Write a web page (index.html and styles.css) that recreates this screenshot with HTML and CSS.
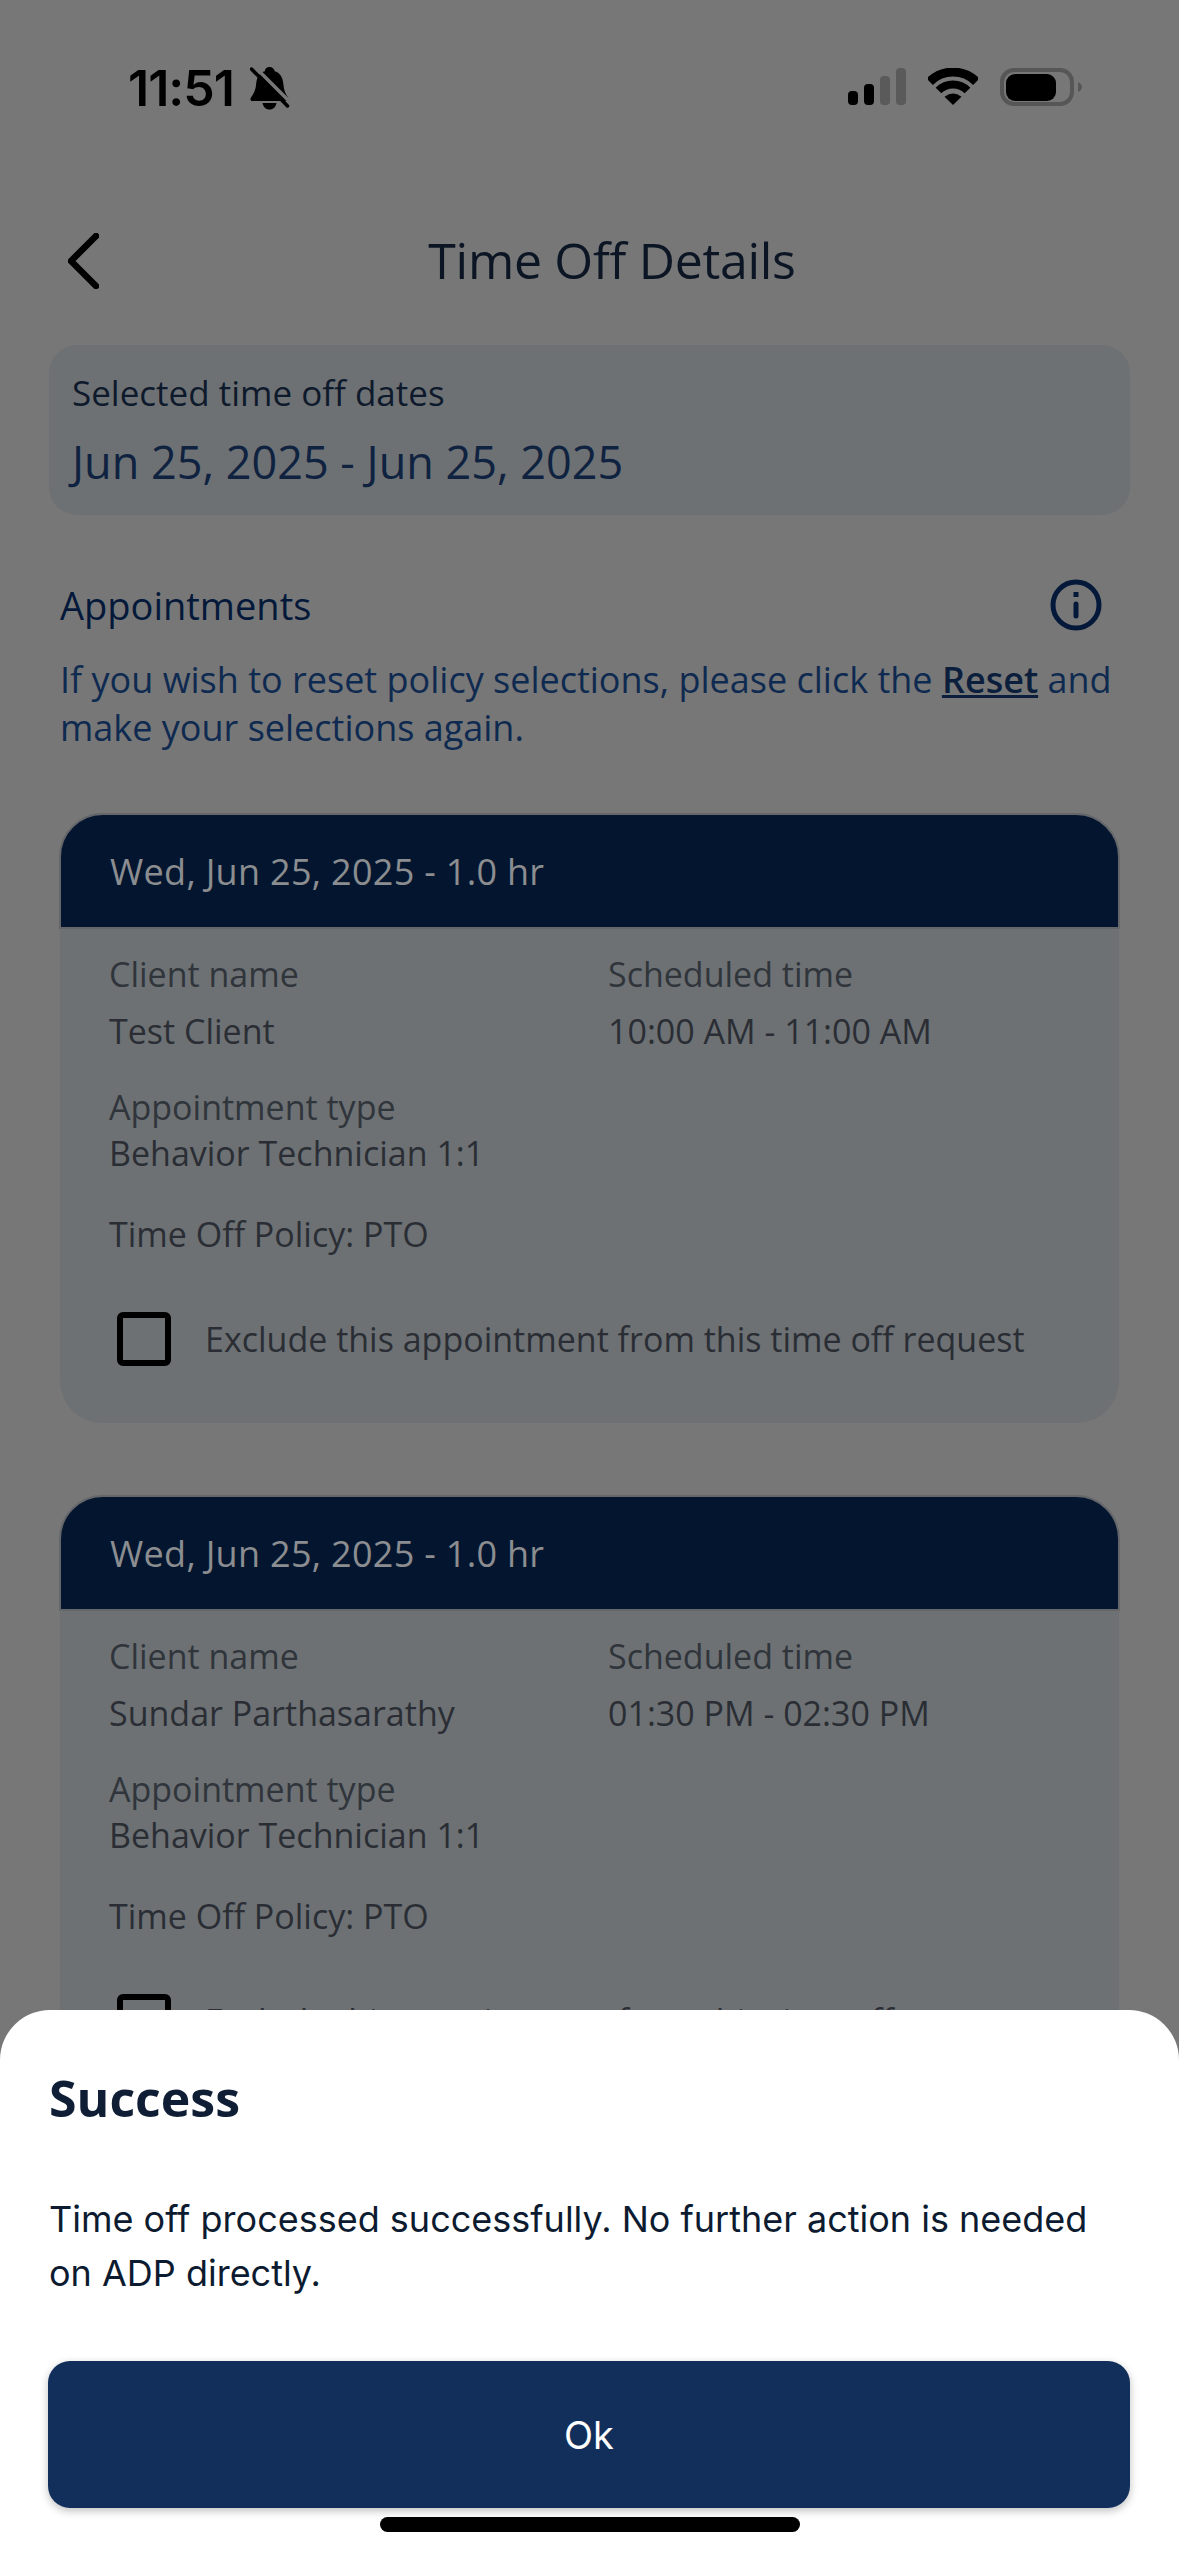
FILE: index.html
```html
<!DOCTYPE html>
<html lang="en">
<head>
<meta charset="utf-8">
<title>Time Off Details</title>
<link rel="stylesheet" href="styles.css">
</head>
<body>
<div class="screen">
  <header class="status">
    <div class="status-left">
      <span class="time">11:51</span>
      <svg class="bell" viewBox="0 0 40 43" width="40" height="43">
        <path d="M19.5 0c3 0 4.6 1.7 5.2 4.2C31 6 33 11.500 33.500 18c.4 5.500 2 9 4.500 12.500 1.300 1.900.5 3.500-1.800 3.500H2.800C.5 34-.3 32.400 1 30.500 3.500 27 5.500 23.500 6 18c.5-6.500 2.500-12 8.800-13.800C15 1.700 16.500 0 19.500 0z"/>
        <path d="M12.500 36h14c-.5 3.800-3.300 6.500-7 6.500s-6.500-2.700-7-6.500z"/>
        <path class="bell-gap" d="M4 -1L42 37"/>
        <path class="bell-slash" d="M1.500 2L37.500 39"/>
      </svg>
    </div>
    <div class="status-right">
      <svg class="signal" viewBox="0 0 58 37" width="58" height="37">
        <rect x="0" y="23" width="10" height="14" rx="4"/>
        <rect x="16" y="16" width="10" height="21" rx="4"/>
        <rect class="dim" x="32" y="8" width="10" height="29" rx="4"/>
        <rect class="dim" x="48" y="0" width="10" height="37" rx="4"/>
      </svg>
      <svg class="wifi" viewBox="0 0 50 37" width="50" height="37">
        <path class="arc-a" d="M1.700 13.700A33 33 0 0 1 48.300 13.700"/>
        <path class="arc-b" d="M10.500 22.500A20.500 20.500 0 0 1 39.500 22.500"/>
        <path d="M25 37L16.500 28.800Q25 22 33.500 28.800Z"/>
      </svg>
      <svg class="battery" viewBox="0 0 82 38" width="82" height="38">
        <rect class="shell" x="2" y="2" width="70" height="34" rx="12"/>
        <rect x="6" y="6" width="50" height="27" rx="9"/>
        <path class="cap" d="M78 14c2.500 1 4 2.700 4 5s-1.500 4-4 5z"/>
      </svg>
    </div>
  </header>

  <nav class="nav">
    <svg class="back" viewBox="0 0 31 56" width="31" height="56">
      <path d="M28 3L3 28L28 53"/>
    </svg>
    <h1 class="nav-title">Time Off Details</h1>
  </nav>

  <section class="dates">
    <div class="dates-label">Selected time off dates</div>
    <div class="dates-value">Jun 25, 2025 - Jun 25, 2025</div>
  </section>

  <section class="intro">
    <div class="intro-head">
      <h2 class="intro-title">Appointments</h2>
      <svg class="info" viewBox="0 0 52 52" width="52" height="52">
        <circle cx="26" cy="26" r="23"/>
        <path d="M26 25V37"/>
        <rect x="23.500" y="13" width="5" height="5"/>
      </svg>
    </div>
    <p class="intro-text">If you wish to reset policy selections, please click the <a class="reset">Reset</a> and make your selections again.</p>
  </section>

  <article class="card">
    <div class="card-head">Wed, Jun 25, 2025 - 1.0 hr</div>
    <div class="card-body">
      <div class="pair-row">
        <div class="pair">
          <div class="label">Client name</div>
          <div class="value">Test Client</div>
        </div>
        <div class="pair">
          <div class="label">Scheduled time</div>
          <div class="value">10:00 AM - 11:00 AM</div>
        </div>
      </div>
      <div class="label type-label">Appointment type</div>
      <div class="value type-value">Behavior Technician 1:1</div>
      <div class="value policy">Time Off Policy: PTO</div>
      <div class="exclude">
        <span class="checkbox"></span>
        <span class="exclude-text">Exclude this appointment from this time off request</span>
      </div>
    </div>
  </article>

  <article class="card">
    <div class="card-head">Wed, Jun 25, 2025 - 1.0 hr</div>
    <div class="card-body">
      <div class="pair-row">
        <div class="pair">
          <div class="label">Client name</div>
          <div class="value">Sundar Parthasarathy</div>
        </div>
        <div class="pair">
          <div class="label">Scheduled time</div>
          <div class="value">01:30 PM - 02:30 PM</div>
        </div>
      </div>
      <div class="label type-label">Appointment type</div>
      <div class="value type-value">Behavior Technician 1:1</div>
      <div class="value policy">Time Off Policy: PTO</div>
      <div class="exclude">
        <span class="checkbox"></span>
        <span class="exclude-text">Exclude this appointment from this time off request</span>
      </div>
    </div>
  </article>

  <aside class="sheet">
    <h3 class="sheet-title">Success</h3>
    <p class="sheet-text">Time off processed successfully. No further action is needed on ADP directly.</p>
    <button class="sheet-btn">Ok</button>
  </aside>
  <div class="home-bar"></div>
</div>
</body>
</html>
```

FILE: styles.css
```css
* { box-sizing: border-box; }
html, body { margin: 0; padding: 0; }
body { background: #777777; font-family: "Open Sans", "Liberation Sans", sans-serif; }
.screen { position: relative; width: 1179px; height: 2556px; overflow: hidden; background: #777777; }

.status { height: 172px; display: flex; justify-content: space-between; padding: 67px 97px 0 128px; }
.status-left { display: flex; align-items: flex-start; gap: 16px; }
.time { font-family: Inter, "Liberation Sans", sans-serif; font-weight: 600; font-size: 50px; line-height: 42px; letter-spacing: -1px; color: #000; }
.bell { display: block; }
.bell path { fill: #000; }
.bell .bell-gap { fill: none; stroke: #777777; stroke-width: 3.500; }
.bell .bell-slash { fill: none; stroke: #000; stroke-width: 3.500; stroke-linecap: round; }
.status-right { display: flex; align-items: flex-start; padding-top: 1px; gap: 22px; }
.signal rect { fill: #000; }
.signal .dim { fill: #5a5a5a; }
.wifi { fill: #000; }
.wifi path { fill: #000; }
.wifi .arc-a { fill: none; stroke: #000; stroke-width: 9; }
.wifi .arc-b { fill: none; stroke: #000; stroke-width: 8; }
.battery rect { fill: #000; }
.battery .shell { fill: none; stroke: #565656; stroke-width: 4; }
.battery .cap { fill: #565656; }

.nav { position: relative; height: 173px; padding-top: 3px; display: flex; align-items: center; justify-content: center; }
.back { position: absolute; left: 68px; top: 61px; }
.back path { fill: none; stroke: #000; stroke-width: 6.500; stroke-linecap: round; stroke-linejoin: round; }
.nav-title { margin: 0 0 0 45px; font-size: 50px; line-height: 64px; font-weight: 500; color: #0b1524; letter-spacing: -0.300px; }

.dates { margin: 0 49px; padding: 26px 23px 25px; background: #6d7174; border-radius: 28px; }
.dates-label { font-size: 35px; line-height: 44px; font-weight: 500; color: #0e1a2b; }
.dates-value { margin-top: 19px; font-size: 45px; line-height: 56px; font-weight: 500; color: #0f2240; }

.intro { padding: 60px 60px 0; }
.intro-head { display: flex; align-items: center; justify-content: space-between; height: 60px; padding-right: 17px; }
.intro-title { margin: 0; font-size: 38px; line-height: 60px; font-weight: 500; color: #04193a; }
.info { display: block; }
.info circle, .info path { fill: none; stroke: #04193a; stroke-width: 5; }
.info path { stroke-linecap: round; stroke-width: 5; }
.info rect { fill: #04193a; }
.intro-text { margin: 21px 0 0; font-size: 36px; line-height: 48px; color: #0f2a50; }
.reset { font-weight: 600; color: #0b1f3d; text-decoration: underline; }

.card { margin: 61px 60px 0; background: #6d7174; border-radius: 42px; height: 610px; }
.card + .card { margin-top: 72px; }
.card-head { margin: 0 -1px; height: 116px; display: flex; align-items: center; padding-left: 49px; background: #04162f; border: 2px solid #64666a; border-radius: 44px 44px 0 0; font-size: 36px; color: #8b8d90; letter-spacing: 0.300px; }
.card-body { padding: 23px 0 0 49px; }
.pair-row { display: grid; grid-template-columns: 499px 1fr; }
.label { font-size: 34px; line-height: 44px; color: #30353b; }
.value { font-size: 34px; line-height: 44px; font-weight: 500; color: #2a2e34; }
.pair .value { margin-top: 13px; }
.type-label { margin-top: 32px; }
.type-value { margin-top: 2px; }
.policy { margin-top: 37px; }
.exclude { display: flex; align-items: center; margin: 56px 0 0 8px; gap: 34px; }
.checkbox { display: block; width: 54px; height: 54px; border: 6px solid #000; border-radius: 6px; }
.exclude-text { font-size: 34px; line-height: 44px; color: #2a2e34; }

.sheet { position: absolute; left: 0; right: 0; top: 2010px; bottom: 0; padding: 56px 49px 0; background: #fff; border-radius: 50px 50px 0 0; }
.sheet-title { margin: 0; font-size: 50px; line-height: 64px; font-weight: 700; color: #0f1e35; }
.sheet-text { margin: 62px 0 0; font-family: Inter, "Liberation Sans", sans-serif; font-size: 36px; line-height: 54px; color: #0d1b30; }
.sheet-btn { display: block; width: 1082px; height: 147px; margin: 61px 0 0 -1px; padding: 0; border: 0; border-radius: 22px; background: #122f5c; box-shadow: 0 3px 8px rgba(0, 0, 0, 0.250); color: #fff; font-family: Inter, "Liberation Sans", sans-serif; font-size: 38px; }
.home-bar { position: absolute; left: 380px; top: 2517px; width: 420px; height: 15px; border-radius: 8px; background: #000; }
```
